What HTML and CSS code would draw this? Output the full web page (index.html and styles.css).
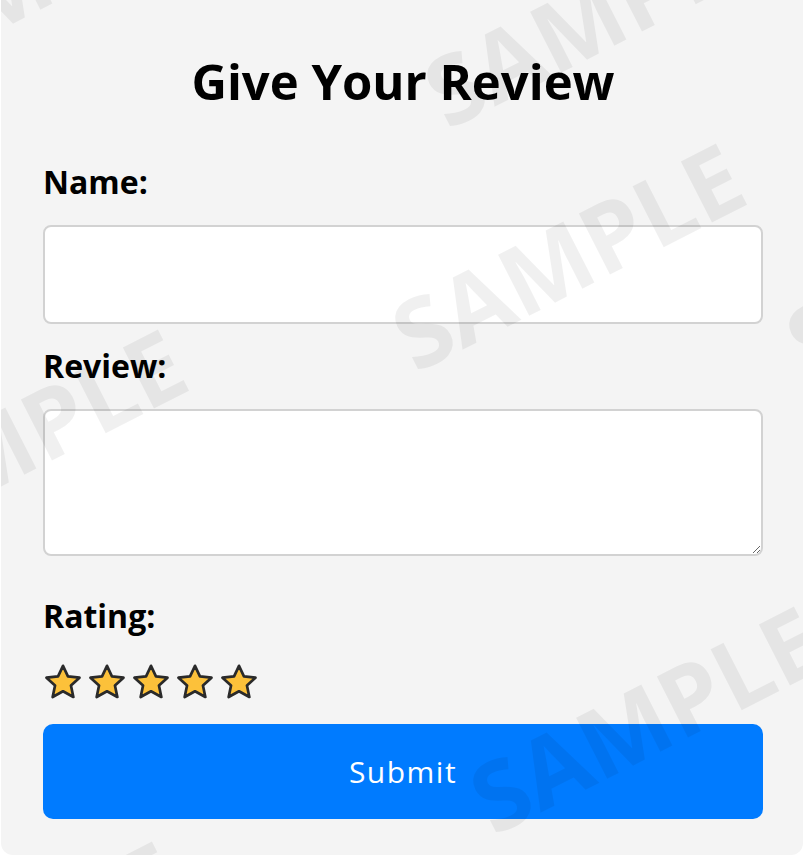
FILE: index.html
```html
<!DOCTYPE html>
<html lang="en">
<head>
<meta charset="utf-8">
<title>Give Your Review</title>
<link rel="stylesheet" href="styles.css">
</head>
<body>
<div class="card">
  <h1 class="title">Give Your Review</h1>
  <form class="form">
    <label class="label" for="name">Name:</label>
    <input class="field field-input" id="name" type="text">
    <label class="label" for="review">Review:</label>
    <textarea class="field field-area" id="review"></textarea>
    <label class="label label-rating">Rating:</label>
    <div class="stars">
      <svg class="star" viewBox="0 0 24 24"><path d="M12 1.2 L15.3 8.2 L23 9.1 L17.3 14.3 L18.9 22 L12 18.2 L5.1 22 L6.7 14.3 L1 9.1 L8.7 8.2 Z"/></svg>
      <svg class="star" viewBox="0 0 24 24"><path d="M12 1.2 L15.3 8.2 L23 9.1 L17.3 14.3 L18.9 22 L12 18.2 L5.1 22 L6.7 14.3 L1 9.1 L8.7 8.2 Z"/></svg>
      <svg class="star" viewBox="0 0 24 24"><path d="M12 1.2 L15.3 8.2 L23 9.1 L17.3 14.3 L18.9 22 L12 18.2 L5.1 22 L6.7 14.3 L1 9.1 L8.7 8.2 Z"/></svg>
      <svg class="star" viewBox="0 0 24 24"><path d="M12 1.2 L15.3 8.2 L23 9.1 L17.3 14.3 L18.9 22 L12 18.2 L5.1 22 L6.7 14.3 L1 9.1 L8.7 8.2 Z"/></svg>
      <svg class="star" viewBox="0 0 24 24"><path d="M12 1.2 L15.3 8.2 L23 9.1 L17.3 14.3 L18.9 22 L12 18.2 L5.1 22 L6.7 14.3 L1 9.1 L8.7 8.2 Z"/></svg>
    </div>
    <button class="submit" type="button">Submit</button>
  </form>
  <div class="watermarks" aria-hidden="true">
    <span class="wm wm-main">SAMPLE</span>
    <span class="wm wm-top">SAMPLE</span>
    <span class="wm wm-br">SAMPLE</span>
    <span class="wm wm-left">SAMPLE</span>
    <span class="wm wm-right">SAMPLE</span>
    <span class="wm wm-tl">SAMPLE</span>
    <span class="wm wm-bl">SAMPLE</span>
  </div>
</div>
</body>
</html>
```
FILE: styles.css
```css
html, body {
  margin: 0;
  padding: 0;
  background: #ffffff;
}

body {
  font-family: "Open Sans", "Liberation Sans", sans-serif;
  color: #000;
}

.card {
  position: relative;
  overflow: hidden;
  box-sizing: border-box;
  width: 802px;
  height: 855px;
  margin-left: 1px;
  padding: 53px 40px 0 42px;
  background: #f4f4f4;
  border-radius: 0 0 12px 12px;
}

.title {
  margin: 0 0 53px;
  font-size: 49px;
  line-height: 56px;
  font-weight: 700;
  text-align: center;
  color: #000;
}

.form {
  display: flex;
  flex-direction: column;
}

.label {
  display: block;
  margin: 0 0 23px;
  font-size: 32px;
  line-height: 40px;
  font-weight: 700;
  color: #000;
}

.field {
  display: block;
  box-sizing: border-box;
  width: 100%;
  margin: 0;
  border: 2px solid #d2d2d2;
  border-radius: 8px;
  background: #fff;
  font-family: inherit;
  font-size: 24px;
  outline: none;
}

.field-input {
  height: 99px;
  margin-bottom: 22px;
}

.field-area {
  height: 147px;
  margin-bottom: 40px;
  resize: vertical;
}

.label-rating {
  margin-bottom: 28px;
}

.stars {
  display: flex;
  gap: 8px;
  height: 36px;
  margin: 0 0 24px 2px;
}

.star {
  width: 36px;
  height: 36px;
  fill: #fcc13a;
  stroke: #2a2a2a;
  stroke-width: 1.8;
  stroke-linejoin: round;
}

.submit {
  display: block;
  width: 100%;
  height: 95px;
  margin: 0;
  border: none;
  border-radius: 10px;
  background: #007bff;
  color: #fff;
  font-family: "Open Sans", "Liberation Sans", sans-serif;
  font-size: 30px;
  letter-spacing: 1.5px;
  font-weight: 400;
}

.watermarks {
  position: absolute;
  inset: 0;
  pointer-events: none;
  z-index: 2;
}

.wm {
  position: absolute;
  transform: translate(-50%, -50%) rotate(-27deg);
  font-family: "Open Sans", "Liberation Sans", sans-serif;
  font-size: 96px;
  font-weight: 700;
  line-height: 1;
  white-space: nowrap;
  color: rgba(0, 0, 0, 0.06);
}

.wm-main { left: 566px; top: 255px; }
.wm-top { left: 598px; top: 12px; }
.wm-br { left: 644px; top: 718px; }
.wm-left { left: 8px; top: 441px; }
.wm-right { left: 960px; top: 262px; }
.wm-tl { left: 24px; top: -24px; }
.wm-bl { left: 2px; top: 953px; }
```
